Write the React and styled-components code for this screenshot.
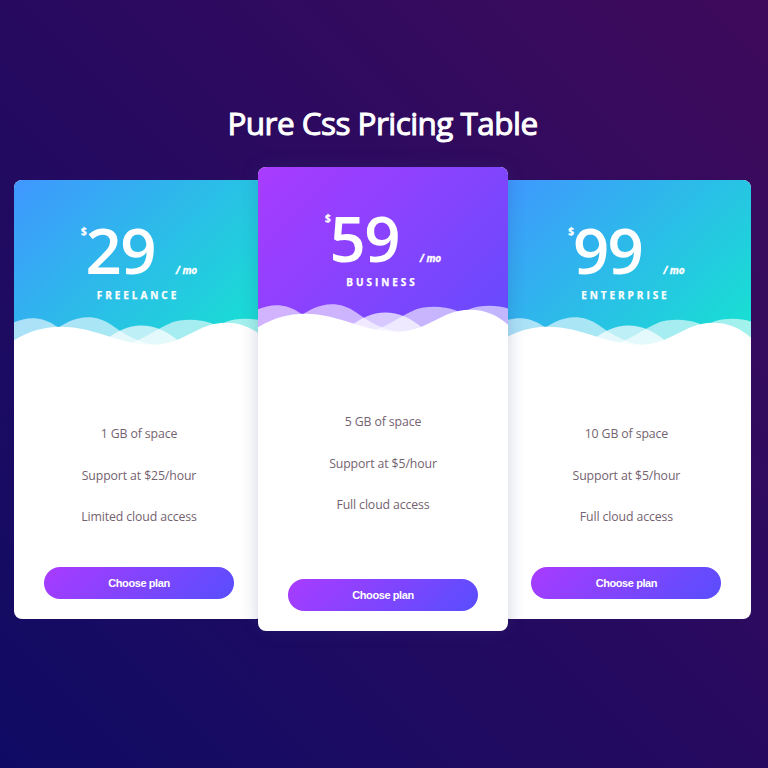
import React from "react";
import styled, { createGlobalStyle, css } from "styled-components";

const GlobalStyle = createGlobalStyle`
  * { box-sizing: border-box; }
  body { margin: 0; }
`;

const Page = styled.main`
  display: flex;
  flex-direction: column;
  align-items: center;
  height: 768px;
  overflow: hidden;
  padding-top: 101px;
  background: linear-gradient(45deg, #0f0b64, #3f0a5c);
  font-family: "Open Sans", sans-serif;
  color: #fff;
`;

const Title = styled.h1`
  margin: 0 3px 0 0;
  height: 66px;
  font-size: 31.5px;
  line-height: 43px;
  font-weight: 400;
  letter-spacing: -0.55px;
  -webkit-text-stroke: 1px #fff;
`;

const Plans = styled.section`
  display: flex;
  align-items: center;
  width: 737px;
  height: 464px;
  margin-right: 3px;
`;

const Card = styled.article`
  flex: 0 0 250px;
  display: flex;
  flex-direction: column;
  height: 439px;
  overflow: hidden;
  border-radius: 8px;
  background: #fff;
  text-align: center;

  &:first-child { margin-right: -6px; }
  &:last-child { margin-left: -6.6px; }

  ${({ $featured }) =>
    $featured &&
    css`
      z-index: 1;
      height: 464px;
      box-shadow: 0 0 17px rgba(46, 59, 125, 0.23);
    `}
`;

const Header = styled.header`
  display: flex;
  flex-direction: column;
  align-items: center;
  flex: 0 0 240px;
  padding-top: 36px;
  background: ${({ $featured }) =>
    $featured
      ? "linear-gradient(135deg, #a93bfe, #584efd)"
      : "linear-gradient(135deg, #4097ff, #0ef1c8)"};
`;

const Price = styled.div`
  display: flex;
  align-items: flex-start;
  height: 70px;
  font-weight: 600;
`;

const Currency = styled.span`
  margin-top: 8px;
  font-size: 10px;
  line-height: 14px;
  font-weight: 700;
  -webkit-text-stroke: 0.3px #fff;
`;

const Amount = styled.span`
  margin-left: -1px;
  font-size: 63.5px;
  line-height: ${({ $featured }) => ($featured ? "69px" : "67px")};
  letter-spacing: -1.7px;
`;

const Period = styled.span`
  margin: ${({ $featured }) => ($featured ? "48px" : "47px")} 0 0 21px;
  font-size: 10px;
  line-height: 14px;
  font-weight: 700;
  font-style: italic;
  letter-spacing: -0.1px;
  -webkit-text-stroke: 0.3px #fff;
`;

const Name = styled.h2`
  margin: 2px 2px 0 0;
  font-size: 10px;
  line-height: 14px;
  font-weight: 700;
  letter-spacing: 2.95px;
  -webkit-text-stroke: 0.25px #fff;
`;

const Waves = styled.svg`
  display: block;
  flex: none;
  width: 250px;
  height: 134px;
  margin-top: -16px;
`;

const Features = styled.ul`
  display: flex;
  flex-direction: column;
  gap: 23.5px;
  margin: 0;
  padding: 6px 0 0;
  list-style: none;
  font-size: 12.3px;
  line-height: 18px;
  letter-spacing: -0.12px;
  color: #74626f;

  ${({ $featured }) => !$featured && css`padding-top: 5.5px;`}
`;

const ChooseButton = styled.button`
  width: 190px;
  height: 32px;
  margin: auto auto 20px;
  padding: 0;
  border: 0;
  border-radius: 16px;
  background: linear-gradient(135deg, #a93bfe, #584efd);
  color: #fff;
  font: 700 11px/32px "Liberation Sans", Arial, sans-serif;
  letter-spacing: -0.42px;
`;

const plans = [
  { name: "FREELANCE", price: 29, features: ["1 GB of space", "Support at $25/hour", "Limited cloud access"] },
  { name: "BUSINESS", price: 59, featured: true, features: ["5 GB of space", "Support at $5/hour", "Full cloud access"] },
  { name: "ENTERPRISE", price: 99, features: ["10 GB of space", "Support at $5/hour", "Full cloud access"] },
];

function WaveArt() {
  return (
    <Waves viewBox="0 0 300 100" preserveAspectRatio="none" fill="#fff" aria-hidden="true">
      <path opacity=".6" d="M30.913,43.944c0,0,42.911-34.464,87.51-14.191c77.31,35.14,113.304-1.952,146.638-4.729c48.654-4.056,69.94,16.218,69.94,16.218v54.396H30.913V43.944z" />
      <path opacity=".6" d="M-35.667,44.628c0,0,42.91-34.463,87.51-14.191c77.31,35.141,113.304-1.952,146.639-4.729c48.653-4.055,69.939,16.218,69.939,16.218v54.396H-35.667V44.628z" />
      <path opacity=".7" d="M43.415,98.342c0,0,48.283-68.927,109.133-68.927c65.886,0,97.983,67.914,97.983,67.914v3.716H42.401L43.415,98.342z" />
      <path d="M0,40.5C20,33 38,30.4 56,30.4C98,30.4 125,43.8 166,43.8C204,43.8 220,27.4 254,27.4C274,27.4 288,32 300,38.6V101H0z" />
    </Waves>
  );
}

function Plan({ plan }) {
  return (
    <Card $featured={plan.featured}>
      <Header $featured={plan.featured}>
        <Price>
          <Currency>$</Currency>
          <Amount $featured={plan.featured}>{plan.price}</Amount>
          <Period $featured={plan.featured}>/ mo</Period>
        </Price>
        <Name>{plan.name}</Name>
        <WaveArt />
      </Header>
      <Features $featured={plan.featured}>
        {plan.features.map((feature) => (
          <li key={feature}>{feature}</li>
        ))}
      </Features>
      <ChooseButton type="button">Choose plan</ChooseButton>
    </Card>
  );
}

export default function App() {
  return (
    <Page>
      <GlobalStyle />
      <Title>Pure Css Pricing Table</Title>
      <Plans>
        {plans.map((plan) => (
          <Plan key={plan.name} plan={plan} />
        ))}
      </Plans>
    </Page>
  );
}
